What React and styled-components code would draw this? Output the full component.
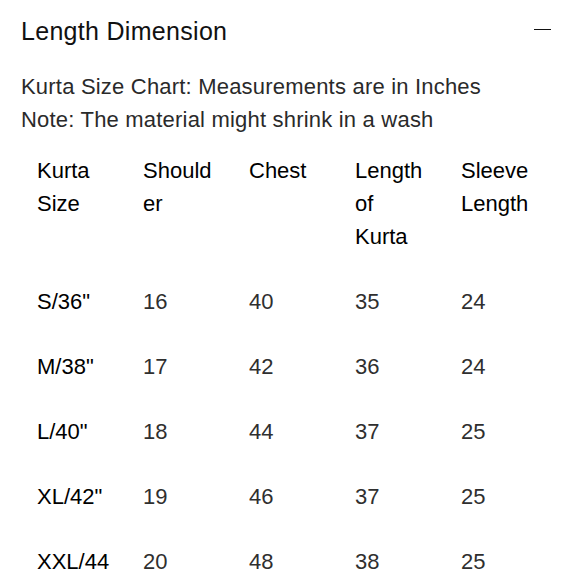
import styled, { createGlobalStyle } from "styled-components";

const GlobalStyle = createGlobalStyle`
body {
  margin: 0;
  background: #fff;
  font-family: "Liberation Sans", Arial, sans-serif;
}
`;

const Panel = styled.div`
padding: 16px 26px 0 21px;
`;
const Header = styled.div`
display: flex;
justify-content: space-between;
align-items: center;
height: 30px;
`;
const Title = styled.h3`
margin: 0;
font-size: 25px;
font-weight: 400;
line-height: 30px;
letter-spacing: 0.3px;
color: #111;
`;
const Minus = styled.span`
width: 17px;
height: 1.5px;
background: #111;
margin-bottom: 3px;
`;
const Note = styled.p`
margin: 24px 0 0;
font-size: 22px;
line-height: 33px;
letter-spacing: 0.2px;
color: #2a2a2a;
`;
const Table = styled.table`
margin-top: 2px;
width: 530px;
border-collapse: collapse;
table-layout: fixed;
font-size: 22px;
line-height: 33px;
`;
const Cell = styled.td`
padding: 16px;
vertical-align: top;
text-align: left;
overflow-wrap: break-word;
font-weight: 400;
color: ${(p) => (p.$head ? "#000" : "#2f2f2f")};
`;

const headers = ["Kurta Size", "Shoulder", "Chest", "Length of Kurta", "Sleeve Length"];
const rows = [
  ['S/36"', 16, 40, 35, 24],
  ['M/38"', 17, 42, 36, 24],
  ['L/40"', 18, 44, 37, 25],
  ['XL/42"', 19, 46, 37, 25],
  ['XXL/44"', 20, 48, 38, 25],
];

const App = () => {
  return <Panel>
    <GlobalStyle />
    <Header>
      <Title>Length Dimension</Title>
      <Minus />
    </Header>
    <Note>
      Kurta Size Chart: Measurements are in Inches<br />
      Note: The material might shrink in a wash
    </Note>
    <Table>
      <thead>
        <tr>
          {headers.map((h) => <Cell as="th" $head key={h}>{h}</Cell>)}
        </tr>
      </thead>
      <tbody>
        {rows.map((r) => (
          <tr key={r[0]}>
            {r.map((v, i) => <Cell $head={i === 0} key={i}>{v}</Cell>)}
          </tr>
        ))}
      </tbody>
    </Table>
  </Panel>
}
export default App;
